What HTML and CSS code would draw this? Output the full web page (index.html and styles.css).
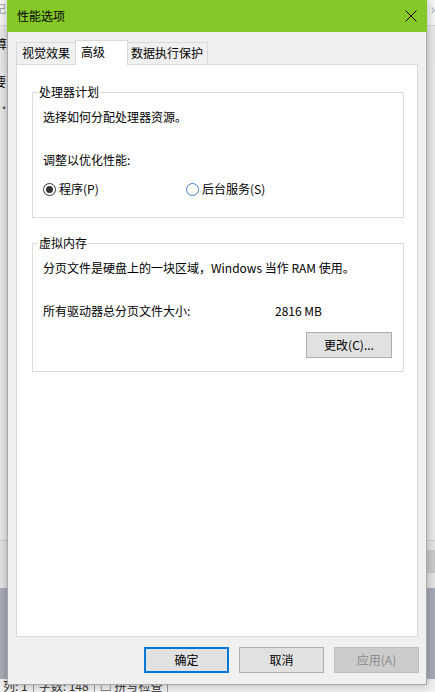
FILE: index.html
```html
<!DOCTYPE html>
<html lang="zh-CN">
<head>
<meta charset="utf-8">
<title>性能选项</title>
<link rel="stylesheet" href="styles.css">
</head>
<body>
<div class="screen">
  <div class="app">
    <div class="app-tabs"><span class="frag frag-gray">记录</span><span class="chev">›</span></div>
    <div class="app-ribbon"><span class="frag">算</span></div>
    <div class="app-body">
      <span class="frag frag-a">要</span>
      <span class="frag frag-b">·</span>
    </div>
    <div class="app-band"><div class="band-right"></div></div>
    <div class="app-dark"></div>
    <div class="status">
      <span class="st">列: 1</span>
      <span class="st">字数: 148</span>
      <span class="st">□ 拼写检查</span>
    </div>
  </div>

  <div class="dialog">
    <div class="titlebar">
      <span class="title">性能选项</span>
      <svg class="close" width="12" height="12" viewBox="0 0 12 12">
        <path d="M0.5 0.5 L11.5 11.5 M11.5 0.5 L0.5 11.5" stroke="#000" stroke-width="1" fill="none"/>
      </svg>
    </div>
    <div class="content">
      <div class="tabs">
        <div class="tab tab-1">视觉效果</div>
        <div class="tab tab-2 active">高级</div>
        <div class="tab tab-3">数据执行保护</div>
      </div>
      <div class="panel">
        <div class="group group-cpu">
          <span class="legend">处理器计划</span>
          <p class="line first">选择如何分配处理器资源。</p>
          <p class="line gap">调整以优化性能:</p>
          <div class="radios">
            <label class="radio radio-1"><span class="dot checked"></span><span>程序(P)</span></label>
            <label class="radio"><span class="dot unchecked"></span><span>后台服务(S)</span></label>
          </div>
        </div>
        <div class="group group-vm">
          <span class="legend">虚拟内存</span>
          <p class="line first">分页文件是硬盘上的一块区域，Windows 当作 RAM 使用。</p>
          <div class="line gap size-row"><span class="size-label">所有驱动器总分页文件大小:</span><span>2816 MB</span></div>
          <div class="btn-row"><button class="btn change">更改(C)...</button></div>
        </div>
      </div>
      <div class="buttons">
        <button class="btn default">确定</button>
        <button class="btn">取消</button>
        <button class="btn disabled">应用(A)</button>
      </div>
    </div>
  </div>
</div>
</body>
</html>
```

FILE: styles.css
```css
* { box-sizing: border-box; }
html, body { margin: 0; padding: 0; }
body {
  width: 435px;
  height: 692px;
  overflow: hidden;
  font-family: "Noto Sans CJK SC", "Microsoft YaHei", sans-serif;
  font-size: 12px;
  color: #000;
  background: #e9e9e9;
}
.screen {
  position: relative;
  width: 435px;
  height: 692px;
  overflow: hidden;
}

/* background application */
.app {
  display: flex;
  flex-direction: column;
  height: 692px;
}
.app-tabs {
  height: 26px;
  flex: none;
  background: #f5f5f5;
  border-bottom: 1px solid #d6d6d6;
  display: flex;
  justify-content: space-between;
  align-items: flex-start;
  line-height: 16px;
}
.frag { margin-left: -5px; line-height: 16px; }
.frag-gray { color: #9a9a9a; font-size: 11px; }
.chev { color: #b0b0b0; font-size: 16px; line-height: 16px; }
.app-ribbon {
  height: 34px;
  flex: none;
  background: #e8e8e8;
  padding-top: 9px;
}
.app-body {
  height: 481px;
  flex: none;
  background: #e9e9e9;
  display: flex;
  flex-direction: column;
  align-items: flex-start;
  padding-top: 14px;
  border-bottom: 1px solid #d0d0d0;
}
.frag-a { margin-left: -6px; }
.frag-b { margin-left: -2px; margin-top: 10px; color: #555; }
.app-band {
  height: 47px;
  flex: none;
  background: #e4e4e4;
  display: flex;
  justify-content: flex-end;
  padding-top: 9px;
}
.band-right { width: 10px; height: 23px; background: #c9c9c9; }
.app-dark {
  height: 91px;
  flex: none;
  background: #a7abb8;
}
.status {
  height: 14px;
  flex: none;
  background: #f0f0f0;
  display: flex;
  align-items: flex-start;
  line-height: 14px;
  color: #333;
  padding-left: 3px;
}
.st {
  padding: 0 5px 0 0;
  margin-right: 5px;
  border-right: 1px solid #9a9a9a;
  height: 14px;
}

/* dialog window */
.dialog {
  position: absolute;
  left: 7px;
  top: 0;
  width: 420px;
  height: 685px;
  background: #f0f0f0;
  border: 1px solid #a8a8a8;
  border-top: 0;
  box-shadow: 0 0 9px rgba(0, 0, 0, 0.28);
  display: flex;
  flex-direction: column;
}
.titlebar {
  height: 32px;
  margin: 0 -1px;
  background: #84c928;
  display: flex;
  align-items: center;
  justify-content: space-between;
  padding: 0 10px 0 10px;
}
.title { line-height: 16px; font-size: 12px; }
.close { display: block; margin-top: -1px; }

.content {
  flex: 1;
  display: flex;
  flex-direction: column;
  padding: 8px 7px 11px 8px;
}
.tabs {
  display: flex;
  align-items: flex-end;
  height: 24px;
  position: relative;
  z-index: 1;
}
.tab {
  height: 22px;
  border: 1px solid #d9d9d9;
  border-bottom: 0;
  background: #f0f0f0;
  line-height: 16px;
  padding: 2px 0 0 5px;
  white-space: nowrap;
}
.tab-1 { width: 60px; }
.tab-2 { width: 53px; margin-left: -1px; }
.tab-3 { width: 81px; margin-left: -1px; padding-left: 3px; }
.tab.active {
  height: 25px;
  margin-bottom: -1px;
  background: #fff;
  padding-top: 3px;
  padding-left: 5px;
}
.panel {
  flex: 1;
  margin-right: 1px;
  background: #fff;
  border: 1px solid #d9d9d9;
  padding: 27px 13px 0 15px;
  display: flex;
  flex-direction: column;
}
.group {
  border: 1px solid #dcdcdc;
  padding: 0 11px 0 10px;
  display: flex;
  flex-direction: column;
  align-items: flex-start;
}
.group-cpu { padding-bottom: 20px; }
.group-vm { margin-top: 25px; padding-bottom: 13px; }
.legend {
  margin: -9px 0 0 -5px;
  padding: 0 1px;
  background: #fff;
  line-height: 16px;
}
.line {
  margin: 0;
  line-height: 16px;
  white-space: nowrap;
}
.line.first { margin-top: 9px; }
.line.gap { margin-top: 27px; }
.radios {
  display: flex;
  margin-top: 13px;
  line-height: 16px;
}
.radio {
  display: flex;
  align-items: center;
  gap: 3px;
}
.radio-1 { width: 143px; }
.dot {
  width: 13px;
  height: 13px;
  border-radius: 50%;
  border: 1px solid #333;
  background: #fff;
  display: flex;
  align-items: center;
  justify-content: center;
}
.dot.checked::after {
  content: "";
  width: 7px;
  height: 7px;
  border-radius: 50%;
  background: #333;
}
.dot.unchecked { border-color: #3f7fcf; }
.size-row { display: flex; }
.size-label { width: 232px; }
.btn-row {
  align-self: stretch;
  display: flex;
  justify-content: flex-end;
  margin-top: 13px;
}
.btn {
  font-family: "Noto Sans CJK SC", "Microsoft YaHei", sans-serif;
  font-size: 12px;
  height: 26px;
  width: 85px;
  background: #e1e1e1;
  border: 1px solid #adadad;
  color: #000;
  padding: 0;
  margin: 0;
  line-height: 16px;
}
.btn.change { width: 86px; }
.buttons {
  display: flex;
  justify-content: flex-end;
  gap: 10px;
  margin-top: 10px;
}
.btn.default { border: 2px solid #0078d7; }
.btn.disabled { background: #cccccc; border-color: #bfbfbf; color: #8a8a8a; }
```
